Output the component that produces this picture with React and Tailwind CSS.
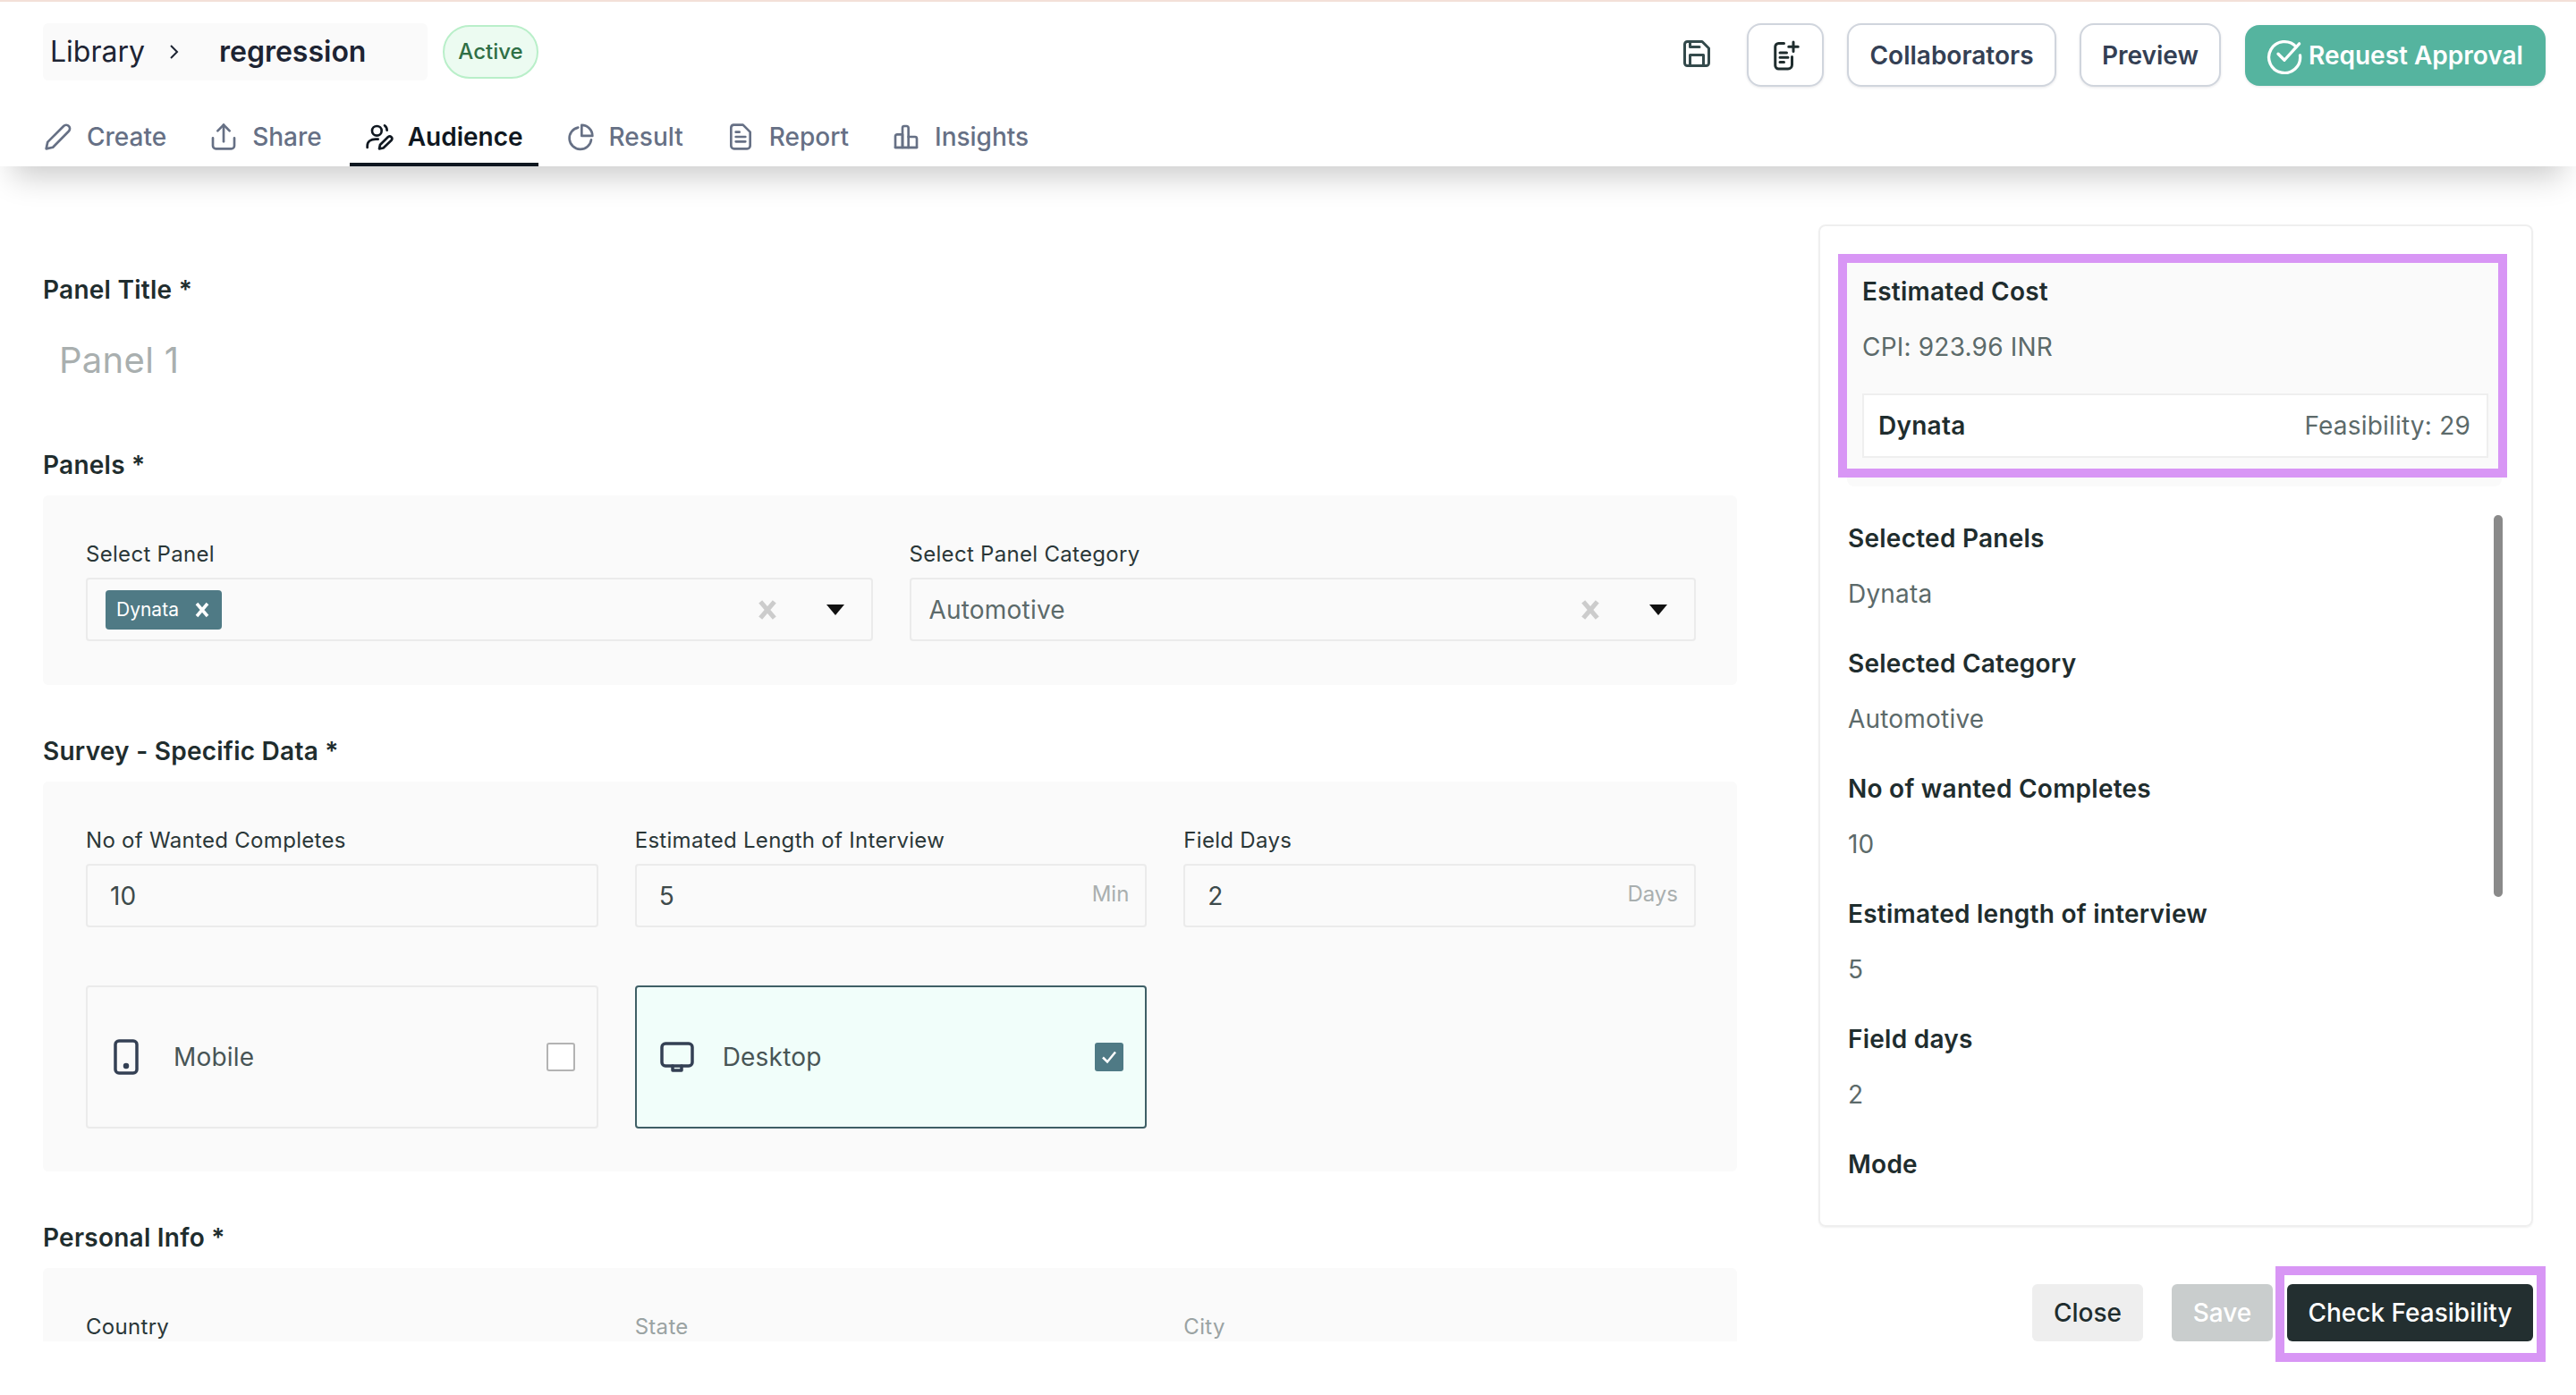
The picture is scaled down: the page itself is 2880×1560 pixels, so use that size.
import React from "react";

const Ico = ({ w = 32, h = 32, vb = "0 0 24 24", sw = 2, className = "", children }) => (
  <svg width={w} height={h} viewBox={vb} fill="none" stroke="currentColor" strokeWidth={sw} strokeLinecap="round" strokeLinejoin="round" className={"shrink-0 " + className}>
    {children}
  </svg>
);

const tabs = [
  { label: "Create", icon: <path d="M2 22l1.2-5.6L16.6 3a3 3 0 0 1 4.3 0 3 3 0 0 1 0 4.3L7.6 20.8 2 22z" /> },
  { label: "Share", icon: <><path d="M3 13v6.500A2.500 2.500 0 0 0 5.500 22h13a2.500 2.500 0 0 0 2.500-2.500V13" /><path d="M12 16V2" /><path d="M7 7l5-5 5 5" /></> },
  { label: "Audience", active: true, icon: <><circle cx="10" cy="7" r="4" /><path d="M16.500 2.500c1.400.9 2 2.200 2 4" /><path d="M2 21v-1.500C2 16 5 14 9 14h2" /><path d="M12 22l.7-3.200 6.800-6.800a2 2 0 0 1 2.800 2.800l-6.900 6.600L12 22z" /></> },
  { label: "Result", icon: <><path d="M10 4.200A9.200 9.200 0 1 0 21 14.500" /><path d="M13 2.200a9 9 0 0 1 9 9h-9v-9z" /></> },
  { label: "Report", icon: <><path d="M6 2h8l6 6v11.500a2.500 2.500 0 0 1-2.500 2.500h-11A2.500 2.500 0 0 1 4 19.500v-15A2.500 2.500 0 0 1 6 2z" /><path d="M8 12h8M8 16h8M8 8h3" /></> },
  { label: "Insights", icon: <><path d="M3 21V11.500A1.500 1.500 0 0 1 4.500 10H9v11H3z" /><path d="M9 21V4.500A1.500 1.500 0 0 1 10.500 3h2A1.500 1.500 0 0 1 14 4.500V21H9z" /><path d="M14 12h5.500A1.500 1.500 0 0 1 21 13.500V21h-7" /><path d="M3 21h18" /></> },
];

const X = ({ className = "", size = 20, sw = 3.5 }) => (
  <svg width={size} height={size} viewBox="0 0 20 20" className={"shrink-0 " + className} fill="none" stroke="currentColor" strokeWidth={sw}>
    <path d="M4 3l12 14M16 3L4 17" />
  </svg>
);

const Caret = () => <div className="w-0 h-0 border-l-[10px] border-r-[10px] border-t-[12px] border-l-transparent border-r-transparent border-t-[#111111]" />;

const Heading = ({ children, className = "" }) => (
  <div className={"h-[40px] leading-[40px] text-[28px] font-semibold text-[#1f2d2e] tracking-[0.25px] " + className}>{children}</div>
);

const Label = ({ children, muted }) => (
  <div className={"h-[36px] leading-[36px] text-[24px] font-normal tracking-[0.3px] mb-[8px] " + (muted ? "text-[#9aa3a3]" : "text-[#2a3738]")}>{children}</div>
);

const Select = ({ children }) => (
  <div className="h-[71px] border-2 border-[#ebebeb] rounded-[4px] flex items-center pl-[20px] pr-[30px]">
    <div className="flex-1 min-w-0 flex items-center">{children}</div>
    <X size={26} sw={4} className="text-[#cccccc] mr-[53px]" />
    <Caret />
  </div>
);

const Input = ({ value, unit }) => (
  <div className="h-[71px] border-2 border-[#ebebeb] rounded-[4px] flex items-center justify-between pl-[25px] pr-[18px]">
    <span className="text-[28px] text-[#3d4a4b]">{value}</span>
    {unit && <span className="text-[24px] text-[#a9afaf] mb-[3px]">{unit}</span>}
  </div>
);

const Checkbox = ({ checked }) =>
  checked ? (
    <div className="w-[32px] h-[32px] rounded-[3px] bg-[#4f7a85] flex items-center justify-center">
      <svg width="22" height="22" viewBox="0 0 22 22" fill="none" stroke="#ffffff" strokeWidth="2.500"><path d="M4 11.500l5 5 9-11" /></svg>
    </div>
  ) : (
    <div className="w-[32px] h-[32px] rounded-[3px] bg-white border-2 border-[#b3b3b3]" />
  );

const summary = [
  ["Selected Panels", "Dynata"],
  ["Selected Category", "Automotive"],
  ["No of wanted Completes", "10"],
  ["Estimated length of interview", "5"],
  ["Field days", "2"],
  ["Mode", ""],
];

const Body = ({ children, className = "" }) => (
  <div className={"text-[28px] tracking-[0.2px] text-[#5c6a6a] " + className}>{children}</div>
);

export default function App() {
  return (
    <div className="w-[2880px] h-[1560px] bg-white overflow-hidden relative font-['Inter',sans-serif] border-t-2 border-[#f3e0d8]">
      <header className="relative z-10 h-[184px] bg-white shadow-[0_26px_32px_-14px_rgba(0,0,0,0.2)]">
        <div className="flex items-start pt-[24px] pl-[48px] pr-[34px] h-[120px]">
          <div className="w-[430px] h-[64px] bg-[#fafafa] rounded-[6px] flex items-center pl-[8px] text-[32px] text-[#1d2433]">
            <span>Library</span>
            <svg width="14" height="20" viewBox="0 0 14 20" fill="none" stroke="#1d2433" strokeWidth="2" className="ml-[26px] mr-[43px]"><path d="M3 3l7 7-7 7" /></svg>
            <span className="font-semibold">regression</span>
          </div>
          <div className="ml-[17px] mt-[2px] w-[107px] h-[60px] rounded-full border-2 border-[#b9efc9] bg-[#ecfbf1] flex items-center justify-center text-[24px] font-medium text-[#2f6f45]">Active</div>
          <div className="ml-auto flex items-start">
            <Ico w={36} h={36} sw={2} className="text-[#344a4c] mt-[16px] mr-[38px]">
              <path d="M3 5a2 2 0 0 1 2-2h11l5 5v11a2 2 0 0 1-2 2H5a2 2 0 0 1-2-2V5z" /><path d="M7 3v4h7" /><path d="M7 21v-8h10v8" />
            </Ico>
            <button className="w-[86px] h-[71px] rounded-[16px] border-2 border-[#d0d5dd] bg-white shadow-[0_1px_3px_rgba(16,24,40,0.1)] flex items-center justify-center text-[#1f2d2e] mr-[26px]">
              <Ico w={36} h={36} sw={2}>
                <path d="M11 3H7a2.500 2.500 0 0 0-2.500 2.500v14A2.500 2.500 0 0 0 7 22h7a3 3 0 0 0 3-3v-6" /><path d="M8 10h5M8 13.500h6M8 17h3" /><path d="M18 2v7M14.500 5.500h7" />
              </Ico>
            </button>
            <button className="w-[234px] h-[71px] rounded-[16px] border-2 border-[#d0d5dd] bg-white shadow-[0_1px_3px_rgba(16,24,40,0.1)] text-[28px] font-semibold text-[#344054] mr-[26px]">Collaborators</button>
            <button className="w-[158px] h-[71px] rounded-[16px] border-2 border-[#d0d5dd] bg-white shadow-[0_1px_3px_rgba(16,24,40,0.1)] text-[28px] font-semibold text-[#344054] mr-[27px]">Preview</button>
            <button className="mt-[2px] w-[336px] h-[68px] rounded-[16px] bg-[#55b49f] shadow-[0_1px_3px_rgba(16,24,40,0.1)] flex items-center pl-[23px] gap-[6px] text-[28px] font-semibold text-white">
              <Ico w={42} h={42} sw={1.900}><path d="M19.500 6.500A10 10 0 1 0 22 12" /><path d="M8 11l4 4L21.500 4.500" /></Ico>
              <span>Request Approval</span>
            </button>
          </div>
        </div>
        <nav className="flex gap-[14px] pl-[32px] h-[64px] items-end">
          {tabs.map((t) => (
            <div key={t.label} className={"h-[62px] px-[17px] flex items-center gap-[16px] border-b-4 text-[28px] " + (t.active ? "border-[#0f1720] text-[#0f1720] font-semibold" : "border-transparent text-[#667085] font-medium")}>
              <Ico>{t.icon}</Ico>
              <span>{t.label}</span>
            </div>
          ))}
        </nav>
      </header>

      <main className="flex pl-[48px] h-[1314px]">
        <section className="w-[1894px] h-full overflow-hidden pt-[118px]">
          <Heading>Panel Title *</Heading>
          <div className="h-[56px] leading-[56px] mt-[31px] pl-[18px] text-[40px] tracking-[0.3px] text-[#a9afaf]">Panel 1</div>
          <Heading className="mt-[69px]">Panels *</Heading>
          <div className="mt-[14px] bg-[#fafafa] rounded-[6px] pl-[48px] pr-[46px] pt-[48px] pb-[49px] grid grid-cols-2 gap-x-[41px]">
            <div>
              <Label>Select Panel</Label>
              <Select>
                <div className="w-[130px] h-[44px] pl-[12px] rounded-[4px] bg-[#4f7a85] text-white text-[21px] flex items-center gap-[16px]">
                  <span>Dynata</span>
                  <X size={20} sw={3.5} />
                </div>
              </Select>
            </div>
            <div>
              <Label>Select Panel Category</Label>
              <Select><Body>Automotive</Body></Select>
            </div>
          </div>
          <Heading className="mt-[54px]">Survey - Specific Data *</Heading>
          <div className="mt-[14px] bg-[#fafafa] rounded-[6px] pl-[48px] pr-[46px] pt-[48px] pb-[48px]">
            <div className="grid grid-cols-3 gap-x-[41px]">
              <div><Label>No of Wanted Completes</Label><Input value="10" /></div>
              <div><Label>Estimated Length of Interview</Label><Input value="5" unit="Min" /></div>
              <div><Label>Field Days</Label><Input value="2" unit="Days" /></div>
            </div>
            <div className="grid grid-cols-3 gap-x-[41px] mt-[65px]">
              <div className="h-[160px] border-2 border-[#ebebeb] rounded-[4px] flex items-center pl-[27px] pr-[24px]">
                <Ico w={32} h={40} vb="0 0 32 40" sw={3.500} className="text-[#344054]">
                  <rect x="4" y="2" width="24" height="36" rx="4" /><circle cx="16" cy="30" r="1.500" fill="currentColor" />
                </Ico>
                <span className="ml-[37px] text-[28px] tracking-[0.2px] text-[#485556]">Mobile</span>
                <div className="ml-auto"><Checkbox /></div>
              </div>
              <div className="h-[160px] border-2 border-[#3f5f66] bg-[#f1fefa] rounded-[4px] flex items-center pl-[26px] pr-[24px]">
                <Ico w={38} h={36} vb="0 0 38 36" sw={3.500} className="text-[#344054]">
                  <rect x="2" y="3" width="34" height="25" rx="4" /><path d="M14 28v5h10v-5" />
                </Ico>
                <span className="ml-[32px] text-[28px] tracking-[0.2px] text-[#485556]">Desktop</span>
                <div className="ml-auto"><Checkbox checked /></div>
              </div>
            </div>
          </div>
          <Heading className="mt-[54px]">Personal Info *</Heading>
          <div className="mt-[14px] bg-[#fafafa] rounded-[6px] pl-[48px] pr-[46px] pt-[48px] pb-[48px] grid grid-cols-3 gap-x-[41px]">
            <div><Label>Country</Label></div>
            <div><Label muted>State</Label></div>
            <div><Label muted>City</Label></div>
          </div>
        </section>

        <aside className="ml-[91px] w-[799px] pt-[65px]">
          <div className="h-[1121px] border-2 border-[#efefef] rounded-[8px] shadow-[0_1px_2px_rgba(0,0,0,0.06)] pt-[32px] px-[30px]">
            <div className="h-[259px] mr-[3px] bg-[#fafafa] rounded-[8px] px-[17px] pt-[21px]">
              <Heading>Estimated Cost</Heading>
              <Body className="h-[40px] leading-[40px] mt-[22px]">CPI: 923.96 INR</Body>
              <div className="mt-[32px] h-[72px] bg-white border-2 border-[#efefef] flex items-center justify-between pl-[16px] pr-[18px] mr-[-2px]">
                <span className="text-[28px] font-semibold tracking-[0.25px] text-[#1f2d2e]">Dynata</span>
                <Body>Feasibility: 29</Body>
              </div>
            </div>
            <div className="relative h-[762px] mt-[32px] overflow-hidden pt-[6px] pl-[1px]">
              {summary.map(([h, v]) => (
                <div key={h} className="h-[140px]">
                  <Heading>{h}</Heading>
                  {v && <Body className="h-[40px] leading-[40px] mt-[22px]">{v}</Body>}
                </div>
              ))}
              <div className="absolute right-[2px] top-0 w-[10px] h-[427px] rounded-full bg-[#8a8a8a]" />
            </div>
          </div>
          <div className="flex justify-end mt-[64px]">
            <button className="w-[124px] h-[64px] rounded-[6px] bg-[#eeeeee] text-[28px] font-medium text-[#1f2d2e]">Close</button>
            <button className="ml-[32px] w-[113px] h-[64px] rounded-[6px] bg-[#c9cdcd] text-[28px] font-medium text-white">Save</button>
            <button className="ml-[16px] w-[275px] h-[64px] rounded-[6px] bg-[#232f30] text-[28px] font-medium text-white">Check Feasibility</button>
          </div>
        </aside>
      </main>

      <div className="absolute left-[2055px] top-[282px] w-[748px] h-[250px] border-[10px] border-[#d896f5] pointer-events-none" />
      <div className="absolute left-[2544px] top-[1414px] w-[302px] h-[107px] border-[10px] border-[#d896f5] pointer-events-none" />
    </div>
  );
}
